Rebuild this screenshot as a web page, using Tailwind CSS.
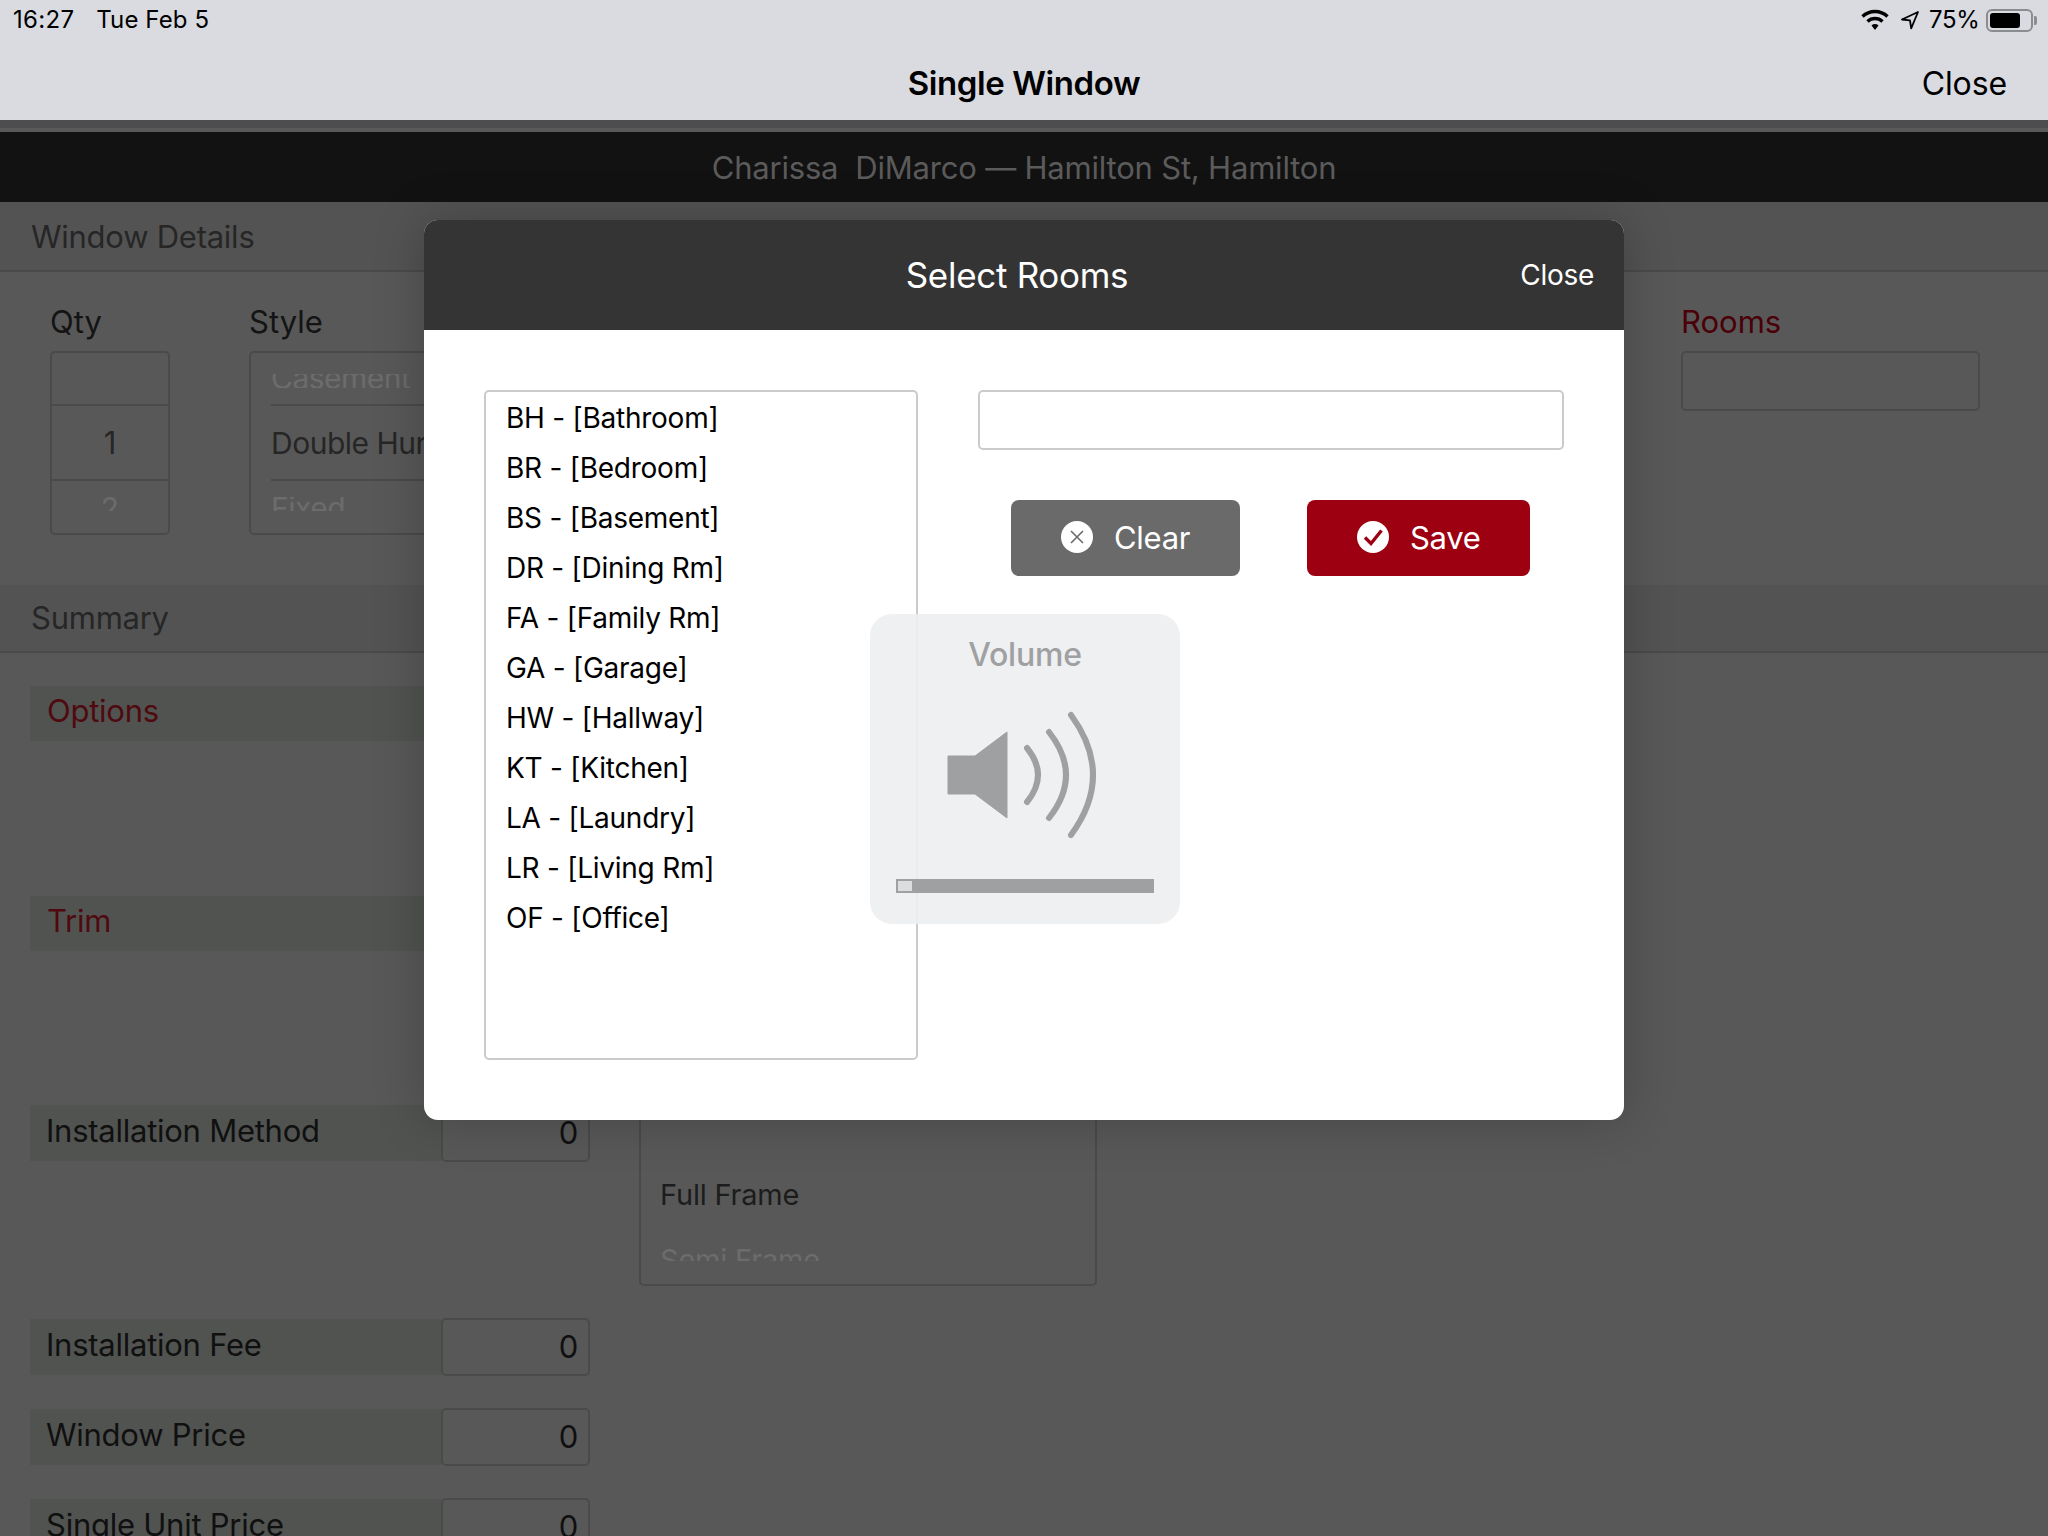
<!DOCTYPE html>
<html><head><meta charset="utf-8"><script src="https://cdn.jsdelivr.net/npm/@tailwindcss/browser@4"></script></head>
<body class="m-0">
<div class="relative w-[2048px] h-[1536px] overflow-hidden bg-[#585858] font-['Inter','Liberation_Sans',sans-serif] text-[#151515]">
  <!-- status + nav -->
  <div class="h-[120px] bg-[#d9dbe0] text-black flex flex-col">
    <div class="h-[40px] flex items-center justify-between pl-[13px] pr-[11px] text-[24px]">
      <div class="flex gap-[22px]"><span class="tracking-[0.3px]">16:27</span><span class="tracking-[0.1px]">Tue Feb 5</span></div>
      <div class="flex items-center">
        <svg class="w-[28px] h-[22px]" viewBox="0 0 28 22"><path d="M1.5 7.5A18 18 0 0 1 26.5 7.5" fill="none" stroke="#000" stroke-width="3.4"/><path d="M6.5 12.5A11 11 0 0 1 21.5 12.5" fill="none" stroke="#000" stroke-width="3.4"/><path d="M10.5 16.5a5 5 0 0 1 7 0L14 21z" fill="#000"/></svg>
        <svg class="w-[20px] h-[20px] ml-[11px]" viewBox="0 0 20 20"><path d="M18 2 2 9.5l8 .8 1.2 8z" fill="none" stroke="#000" stroke-width="1.8" stroke-linejoin="round"/></svg>
        <span class="ml-[9px] w-[57px] tracking-[-0.3px]">75%</span>
        <div class="w-[47px] h-[23px] rounded-[6px] border-2 border-[#8b8c90] p-[2px] ml-0"><div class="w-[30px] h-full rounded-[3px] bg-black"></div></div>
        <div class="w-[3px] h-[9px] bg-[#8b8c90] rounded-r-[2px] ml-[1px]"></div>
      </div>
    </div>
    <div class="relative flex-1 flex items-center justify-center pt-[8px]">
      <span class="text-[33px] font-semibold tracking-[-0.4px]">Single Window</span>
      <span class="absolute right-[41px] text-[32px] tracking-[-0.1px]">Close</span>
    </div>
  </div>
  <div class="h-[8px] bg-[#4d4d4f]"></div>
  <div class="h-[4px] bg-[#5a5a5a]"></div>
  <div class="h-[70px] bg-[#121212] flex items-center justify-center pt-[3px] text-[31px] tracking-[-0.2px] text-[#5b5b5b]">Charissa&nbsp; DiMarco — Hamilton St, Hamilton</div>
  <!-- window details -->
  <div class="h-[70px] bg-[#535353] border-b-2 border-[#4a4a4a] pl-[31px] pt-[3px] flex items-center text-[31px] tracking-[-0.25px] text-[#262626]">Window Details</div>
  <div class="h-[313px] pt-[31px] flex text-[31px]">
    <div class="ml-[50px] w-[120px]">
      <div class="h-[38px] leading-[38px] text-[#141414]">Qty</div>
      <div class="mt-[10px] h-[184px] rounded-[5px] border-2 border-[#4a4a4a] flex flex-col text-center">
        <div class="h-[53px] border-b-2 border-[#4a4a4a]"></div>
        <div class="h-[73px] pt-[2px] flex items-center justify-center text-[#262626]">1</div>
        <div class="flex-1 border-t-2 border-[#4a4a4a] pt-[16px]"><div class="h-[14px] overflow-hidden leading-[22px] text-[#6c6c6c] text-[30px]">2</div></div>
      </div>
    </div>
    <div class="ml-[79px] w-[300px]">
      <div class="h-[38px] leading-[38px] text-[#141414]">Style</div>
      <div class="mt-[10px] h-[184px] rounded-[5px] border-2 border-[#4a4a4a] flex flex-col pl-[20px] text-[30px] tracking-[-0.5px]">
        <div class="h-[53px] border-b-2 border-[#4a4a4a] pt-[21px]"><div class="h-[14px] overflow-hidden text-[#6c6c6c] whitespace-nowrap"><div class="-mt-[11px] leading-[30px]">Casement</div></div></div>
        <div class="h-[73px] pt-[2px] flex items-center text-[#262626] whitespace-nowrap">Double Hung</div>
        <div class="flex-1 border-t-2 border-[#4a4a4a] pt-[16px]"><div class="h-[14px] overflow-hidden leading-[22px] text-[#6c6c6c]">Fixed</div></div>
      </div>
    </div>
    <div class="ml-auto mr-[68px] w-[299px]">
      <div class="h-[38px] leading-[38px] text-[#4a0008]">Rooms</div>
      <div class="mt-[10px] h-[60px] rounded-[5px] border-2 border-[#4a4a4a]"></div>
    </div>
  </div>
  <!-- summary -->
  <div class="h-[68px] bg-[#535353] border-b-2 border-[#4a4a4a] pl-[31px] flex items-center text-[31px] tracking-[-0.25px] text-[#262626]">Summary</div>
  <div class="flex text-[31px] tracking-[-0.25px]">
    <div class="w-[560px] ml-[30px] shrink-0">
      <div class="mt-[33px] h-[55px] bg-[#515351] pl-[17px] pb-[4px] flex items-center text-[#4f0a10]">Options</div>
      <div class="mt-[155px] h-[55px] bg-[#515351] pl-[17px] pb-[4px] flex items-center text-[#4f0a10]">Trim</div>
      <div class="mt-[154px] flex h-[57px]"><div class="w-[411px] h-[56px] bg-[#515351] pl-[16px] pb-[3px] flex items-center text-[#101010] whitespace-nowrap">Installation Method</div><div class="flex-1 rounded-[5px] border-2 border-[#4a4a4a] flex items-center justify-end pr-[10px] text-[#101010]">0</div></div>
      <div class="mt-[156px] flex h-[58px] items-center"><div class="w-[411px] h-[56px] bg-[#515351] pl-[16px] pb-[3px] flex items-center text-[#101010]">Installation Fee</div><div class="flex-1 h-[58px] rounded-[5px] border-2 border-[#4a4a4a] flex items-center justify-end pr-[10px] text-[#101010]">0</div></div>
      <div class="mt-[32px] flex h-[58px] items-center"><div class="w-[411px] h-[56px] bg-[#515351] pl-[16px] pb-[3px] flex items-center text-[#101010]">Window Price</div><div class="flex-1 h-[58px] rounded-[5px] border-2 border-[#4a4a4a] flex items-center justify-end pr-[10px] text-[#101010]">0</div></div>
      <div class="mt-[32px] flex h-[58px] items-center"><div class="w-[411px] h-[56px] bg-[#515351] pl-[16px] pb-[3px] flex items-center text-[#101010]">Single Unit Price</div><div class="flex-1 h-[58px] rounded-[5px] border-2 border-[#4a4a4a] flex items-center justify-end pr-[10px] text-[#101010]">0</div></div>
    </div>
    <div class="ml-[49px] mt-[347px] w-[458px] h-[286px] rounded-[5px] border-2 border-[#4a4a4a] pl-[19px] pt-[173px] text-[29px] tracking-[-0.2px]">
      <div class="h-[40px] flex items-center text-[#1c1c1c]">Full Frame</div>
      <div class="mt-[32px] h-[14px] overflow-hidden leading-[26px] text-[#6c6c6c]">Semi Frame</div>
    </div>
  </div>

  <!-- modal -->
  <div class="absolute left-[424px] top-[220px] w-[1200px] h-[900px] rounded-[14px] overflow-hidden bg-white shadow-[0_0_50px_rgba(0,0,0,0.22)]">
    <div class="relative h-[110px] bg-[#343434] flex items-center justify-center text-white">
      <span class="text-[35px] tracking-[-0.3px] -ml-[14px]">Select Rooms</span>
      <span class="absolute right-[30px] text-[28px] tracking-[-0.3px]">Close</span>
    </div>
    <div class="flex pl-[60px] pt-[60px] text-black">
      <div class="w-[434px] h-[670px] rounded-[5px] border-2 border-[#cbcbcb] pl-[20px] pt-[1px] text-[28px] leading-[50px] tracking-[-0.25px]">
        <div>BH - [Bathroom]</div><div>BR - [Bedroom]</div><div>BS - [Basement]</div><div>DR - [Dining Rm]</div><div>FA - [Family Rm]</div><div>GA - [Garage]</div><div>HW - [Hallway]</div><div>KT - [Kitchen]</div><div>LA - [Laundry]</div><div>LR - [Living Rm]</div><div>OF - [Office]</div>
      </div>
      <div class="ml-[60px] w-[586px]">
        <div class="h-[60px] rounded-[5px] border-2 border-[#cbcbcb]"></div>
        <div class="flex mt-[50px] ml-[33px] text-white text-[31px] tracking-[-0.3px]">
          <div class="w-[229px] h-[76px] rounded-[8px] bg-[#6a6a6a] flex items-center pl-[50px]">
            <svg class="w-[32px] h-[32px] -mt-[2px]" viewBox="0 0 32 32"><circle cx="16" cy="16" r="16" fill="#fff"/><path d="M10 10l12 12M22 10 10 22" stroke="#6a6a6a" stroke-width="1.6"/></svg>
            <span class="ml-[21px]">Clear</span>
          </div>
          <div class="ml-[67px] w-[223px] h-[76px] rounded-[8px] bg-[#9d0010] flex items-center pl-[50px]">
            <svg class="w-[32px] h-[32px] -mt-[2px]" viewBox="0 0 32 32"><circle cx="16" cy="16" r="16" fill="#fff"/><path d="M8 16.5l6 6L24.5 9.5" fill="none" stroke="#9d0010" stroke-width="3.4"/></svg>
            <span class="ml-[21px]">Save</span>
          </div>
        </div>
      </div>
    </div>
  </div>

  <!-- volume HUD -->
  <div class="absolute left-[870px] top-[614px] w-[310px] h-[310px] rounded-[22px] bg-[#edeef0]/90 text-[#9fa0a2] flex flex-col items-center">
    <div class="mt-[21px] text-[32px] font-medium leading-[40px] tracking-[-0.2px]">Volume</div>
    <svg class="absolute left-[75px] top-[96px] w-[155px] h-[130px]" viewBox="945 710 155 130">
      <path d="M948 756h27l32-24v86l-32-24h-27z" fill="#9fa0a2" stroke="#9fa0a2" stroke-width="1" stroke-linejoin="round"/>
      <path d="M1027 748Q1049 775 1027 802" fill="none" stroke="#9fa0a2" stroke-width="6" stroke-linecap="round"/>
      <path d="M1049 732Q1083 775 1049 818" fill="none" stroke="#9fa0a2" stroke-width="6" stroke-linecap="round"/>
      <path d="M1071 715Q1115 775 1071 835" fill="none" stroke="#9fa0a2" stroke-width="6" stroke-linecap="round"/>
    </svg>
    <div class="absolute left-[26px] top-[265px] w-[258px] h-[14px] bg-[#9fa0a2] p-[2px]"><div class="w-[14px] h-[10px] bg-[#dcdddf]"></div></div>
  </div>
</div>
</body></html>
